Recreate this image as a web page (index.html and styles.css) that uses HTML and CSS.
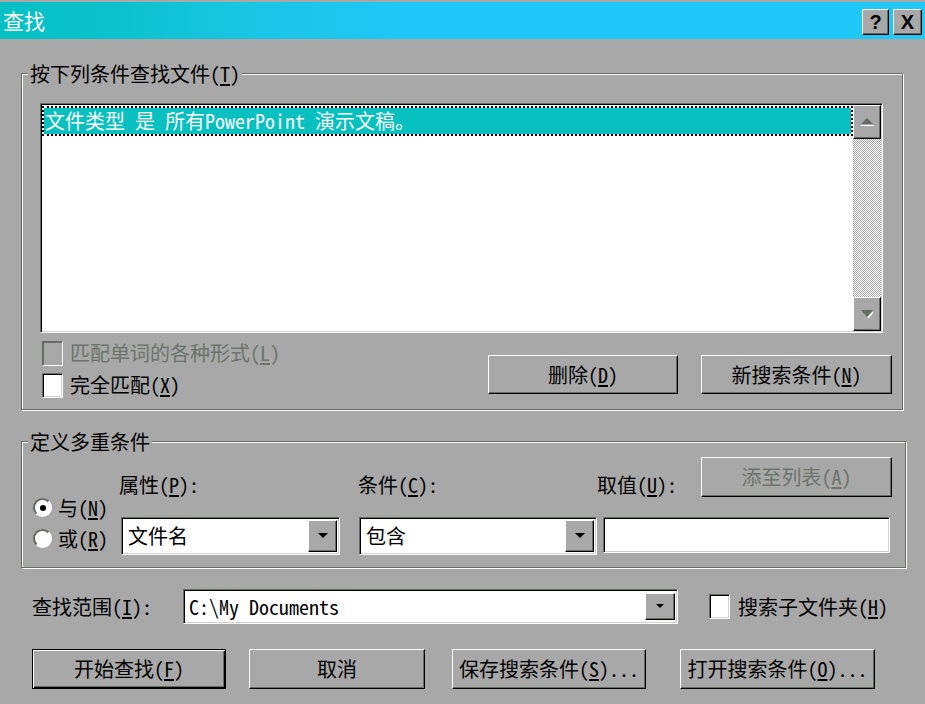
FILE: index.html
```html
<!DOCTYPE html>
<html lang="zh-CN">
<head>
    <meta charset="UTF-8">
    <title>查找</title>
    <link rel="stylesheet" href="styles.css">
</head>
<body>
<div class="titlebar">
    <span class="title">查找</span>
    <div class="title-buttons">
        <span class="tbtn">?</span>
        <span class="tbtn tbtn-close">X</span>
    </div>
</div>

<!-- 查找条件列表 -->
<div class="group group-criteria">
    <span class="group-title">按下列条件查找文件(<u>T</u>)</span>
    <div class="criteria-body">
        <div class="listbox">
            <div class="list-items">
                <div class="list-item selected">文件类型 是 所有PowerPoint 演示文稿。</div>
            </div>
            <div class="vscroll">
                <div class="sbtn">
                    <svg width="14" height="10" viewBox="0 0 14 10"><polygon points="1,7 7,1 13,7" fill="#646c64"/><rect x="1" y="8" width="13" height="1" fill="#fff"/></svg>
                </div>
                <div class="track"></div>
                <div class="sbtn">
                    <svg width="14" height="10" viewBox="0 0 14 10"><polygon points="1,1 13,1 7,8" fill="#646c64"/><line x1="8" y1="9" x2="13" y2="3" stroke="#fff" stroke-width="1.4"/></svg>
                </div>
            </div>
        </div>
        <div class="list-options">
            <div class="checks">
                <label class="check disabled"><span class="box"></span><span>匹配单词的各种形式(<u>L</u>)</span></label>
                <label class="check"><span class="box"></span><span>完全匹配(<u>X</u>)</span></label>
            </div>
            <div class="list-buttons">
                <button class="btn btn-delete">删除(<u>D</u>)</button>
                <button class="btn btn-new">新搜索条件(<u>N</u>)</button>
            </div>
        </div>
    </div>
</div>

<!-- 定义多重条件 -->
<div class="group group-define">
    <span class="group-title">定义多重条件</span>
    <div class="define-body">
        <div class="radios">
            <label class="radio"><span class="dot checked"><span></span></span><span>与(<u>N</u>)</span></label>
            <label class="radio"><span class="dot"></span><span>或(<u>R</u>)</span></label>
        </div>
        <div class="field field-attr">
            <div class="field-head"><span>属性(<u>P</u>):</span></div>
            <div class="combo">
                <span class="combo-text">文件名</span>
                <span class="drop"><svg width="10" height="6" viewBox="0 0 10 6"><polygon points="0,0 10,0 5,5" fill="#000"/></svg></span>
            </div>
        </div>
        <div class="field field-cond">
            <div class="field-head"><span>条件(<u>C</u>):</span></div>
            <div class="combo">
                <span class="combo-text">包含</span>
                <span class="drop"><svg width="10" height="6" viewBox="0 0 10 6"><polygon points="0,0 10,0 5,5" fill="#000"/></svg></span>
            </div>
        </div>
        <div class="field field-value">
            <div class="field-head">
                <span>取值(<u>U</u>):</span>
                <button class="btn btn-add" disabled>添至列表(<u>A</u>)</button>
            </div>
            <div class="textbox"></div>
        </div>
    </div>
</div>

<!-- 查找范围 -->
<div class="look-in">
    <span class="look-label">查找范围(<u>I</u>):</span>
    <div class="combo combo-path">
        <span class="combo-text">C:\My Documents</span>
        <span class="drop drop-small"><svg width="8" height="5" viewBox="0 0 8 5"><polygon points="0,0 8,0 4,4" fill="#000"/></svg></span>
    </div>
    <label class="check check-sub"><span class="box"></span><span>搜索子文件夹(<u>H</u>)</span></label>
</div>

<div class="actions">
    <button class="btn btn-default btn-find">开始查找(<u>F</u>)</button>
    <button class="btn btn-cancel">取消</button>
    <button class="btn btn-save">保存搜索条件(<u>S</u>)...</button>
    <button class="btn btn-open">打开搜索条件(<u>O</u>)...</button>
</div>
</body>
</html>
```

FILE: styles.css
```css
* {
    box-sizing: border-box;
}
html, body {
    margin: 0;
}
body {
    width: 925px;
    height: 704px;
    overflow: hidden;
    padding-top: 2px;
    background: #a8a8a8;
    color: #000;
    font-family: "Noto Sans Mono CJK SC", "Noto Sans CJK SC", sans-serif;
    font-size: 20px;
    line-height: 24px;
}
u {
    text-decoration: underline;
    text-underline-offset: 2px;
}

/* title bar */
.titlebar {
    display: flex;
    justify-content: space-between;
    align-items: flex-start;
    height: 37px;
    background: linear-gradient(90deg, #06c0c4 0%, #0cc2cc 12%, #1ac6e8 30%, #20c8f8 45%, #20c8f8 100%);
}
.title {
    padding-left: 3px;
    color: #fff;
    font-size: 21px;
    line-height: 37px;
}
.title-buttons {
    display: flex;
    gap: 4px;
    margin: 7px 3px 0 0;
}
.tbtn {
    width: 27px;
    height: 26px;
    background: #a8a8a8;
    border: 1px solid;
    border-color: #fff #000 #000 #fff;
    box-shadow: inset -1px -1px 0 #646c64;
    font: bold 20px/24px "Liberation Sans", sans-serif;
    text-align: center;
}
.tbtn-close {
    width: 29px;
}

/* etched group box */
.group {
    margin-left: 21px;
    border: 1px solid #646c64;
    box-shadow: inset 1px 1px 0 #fff, 1px 1px 0 #fff;
}
.group-title {
    display: table;
    margin: -12px 0 0 6px;
    padding: 0 2px;
    background: #a8a8a8;
    line-height: 24px;
}
.group-criteria {
    width: 882px;
    margin-top: 34px;
}
.group-define {
    width: 885px;
    margin-top: 31px;
}

.criteria-body {
    padding: 17px 10px 11px 18px;
}

/* listbox */
.listbox {
    display: flex;
    width: 843px;
    height: 230px;
    padding: 1px;
    background: #fff;
    border: 1px solid;
    border-color: #646c64 #fff #fff #646c64;
    box-shadow: inset 1px 1px 0 #000, inset -1px -1px 0 #d0d0d0;
}
.list-items {
    flex: 1;
    padding-top: 1px;
}
.list-item.selected {
    height: 30px;
    padding-left: 1px;
    border: 2px dotted #000;
    background: linear-gradient(#08c0c0, #08c0c0) padding-box, #fff;
    color: #fff;
    line-height: 26px;
    white-space: nowrap;
}
.vscroll {
    display: flex;
    flex-direction: column;
    width: 28px;
}
.sbtn {
    display: flex;
    align-items: center;
    justify-content: center;
    height: 34px;
    background: #a8a8a8;
    border: 1px solid;
    border-color: #fff #000 #000 #fff;
    box-shadow: inset -1px -1px 0 #646c64;
}
.track {
    flex: 1;
    background: repeating-conic-gradient(#fff 0 25%, #a8a8a8 0 50%) 0 0 / 2px 2px;
}

/* check boxes */
.list-options {
    display: flex;
    margin-top: 7px;
}
.checks {
    display: flex;
    flex-direction: column;
    gap: 6px;
    margin-left: 2px;
}
.check {
    display: flex;
    align-items: center;
    gap: 7px;
    height: 26px;
    white-space: nowrap;
}
.box {
    width: 21px;
    height: 25px;
    background: #fff;
    border: 1px solid;
    border-color: #646c64 #fff #fff #646c64;
    box-shadow: inset 1px 1px 0 #000, inset -1px -1px 0 #d0d0d0;
}
.check.disabled {
    color: #6c746c;
}
.check.disabled .box {
    background: #a8a8a8;
    box-shadow: inset 1px 1px 0 #646c64;
}
.list-buttons {
    display: flex;
    gap: 23px;
    margin: 15px 0 0 auto;
}

/* buttons */
.btn {
    height: 40px;
    padding: 0;
    background: #a8a8a8;
    color: #000;
    font: inherit;
    line-height: 24px;
    border: 1px solid;
    border-color: #fff #000 #000 #fff;
    box-shadow: inset -1px -1px 0 #646c64;
    white-space: nowrap;
}
.btn:disabled {
    color: #6c746c;
}
.btn-delete {
    width: 190px;
    height: 39px;
}
.btn-new {
    width: 191px;
    height: 39px;
}
.btn-default {
    border-color: #000;
    box-shadow: inset 1px 1px 0 #fff, inset -1px -1px 0 #000, inset -2px -2px 0 #646c64;
}

/* multi criteria */
.define-body {
    display: flex;
    padding: 3px 0 12px 11px;
}
.radios {
    display: flex;
    flex-direction: column;
    gap: 12px;
    width: 86px;
    align-self: flex-end;
    margin-bottom: 7px;
}
.radio {
    display: flex;
    align-items: center;
    gap: 6px;
    height: 19px;
    white-space: nowrap;
}
.dot {
    display: flex;
    align-items: center;
    justify-content: center;
    width: 19px;
    height: 19px;
    border-radius: 50%;
    background: #fff;
    border: 2px solid;
    border-color: #646c64 #fff #fff #646c64;
}
.dot.checked span {
    width: 6px;
    height: 6px;
    border-radius: 50%;
    background: #000;
}
.field-head {
    display: flex;
    align-items: flex-end;
    justify-content: space-between;
    height: 40px;
    margin-bottom: 20px;
}
.field-attr {
    width: 221px;
}
.field-attr .combo {
    margin-left: 2px;
}
.field-cond {
    width: 239px;
    margin-left: 18px;
}
.field-cond .combo {
    margin-left: 1px;
}
.field-value {
    width: 295px;
}
.btn-add {
    width: 191px;
}

/* combo and text box */
.combo, .textbox {
    display: flex;
    height: 38px;
    padding: 2px;
    background: #fff;
    border: 1px solid;
    border-color: #646c64 #fff #fff #646c64;
    box-shadow: inset 1px 1px 0 #000, inset -1px -1px 0 #d0d0d0;
}
.combo-text {
    flex: 1;
    align-self: center;
    padding-left: 4px;
    white-space: nowrap;
}
.drop {
    display: flex;
    align-items: center;
    justify-content: center;
    width: 29px;
    background: #a8a8a8;
    border: 1px solid;
    border-color: #fff #000 #000 #fff;
    box-shadow: inset -1px -1px 0 #646c64;
}
.textbox {
    width: 287px;
    height: 36px;
    margin-left: 6px;
}

/* look in */
.look-in {
    display: flex;
    align-items: center;
    margin-top: 21px;
    padding-left: 32px;
}
.look-label {
    width: 151px;
}
.combo-path {
    width: 495px;
    height: 35px;
}
.combo-path .combo-text {
    padding-left: 3px;
}
.drop-small {
    width: 30px;
    margin: 1px 0;
}
.check-sub {
    margin-left: 31px;
    gap: 8px;
}

/* bottom buttons */
.actions {
    display: flex;
    margin-top: 25px;
    padding-left: 32px;
}
.btn-find {
    width: 194px;
}
.btn-cancel {
    width: 176px;
    margin-left: 23px;
}
.btn-save {
    width: 194px;
    margin-left: 27px;
}
.btn-open {
    width: 195px;
    margin-left: 34px;
}
```
